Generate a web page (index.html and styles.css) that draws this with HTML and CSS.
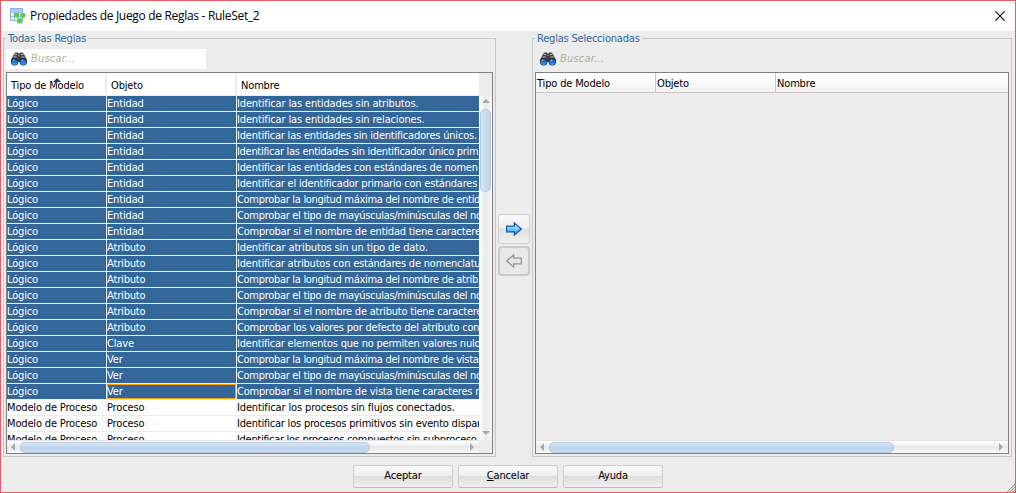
FILE: index.html
```html
<!DOCTYPE html>
<html lang="es">
<head>
<meta charset="utf-8">
<title>Propiedades de Juego de Reglas - RuleSet_2</title>
<link rel="stylesheet" href="styles.css">
</head>
<body>
<svg class="defs" width="0" height="0" aria-hidden="true">
  <defs>
    <linearGradient id="lens" x1="0" y1="0" x2="0" y2="1"><stop offset="0" stop-color="#0a55c4"/><stop offset="1" stop-color="#2da0ff"/></linearGradient>
    <linearGradient id="blue" x1="0" y1="0" x2="0" y2="1"><stop offset="0" stop-color="#e4f6ff"/><stop offset=".5" stop-color="#7cc8fa"/><stop offset="1" stop-color="#1a86e8"/></linearGradient>
    <symbol id="binoculars" viewBox="0 0 16 14">
      <path d="M3 2 4.500.5H7L8 2 9 .5h2.500L13 2l3 6v2H0V8z" fill="#444"/>
      <path d="M3.500 2.500h2.500M10 2.500h2.500M2.500 5h3M10.500 5h3M7.500 3.500h1" stroke="#bbb" stroke-width="1"/>
      <circle cx="3.700" cy="9.700" r="3.700" fill="#222"/><circle cx="12.300" cy="9.700" r="3.700" fill="#222"/>
      <circle cx="3.700" cy="10" r="3" fill="url(#lens)"/><circle cx="12.300" cy="10" r="3" fill="url(#lens)"/>
      <path d="M1.800 8.700 3.500 7.900M10.400 8.700l1.700-.8" stroke="#cfe6ff" stroke-width=".8"/>
    </symbol>
  </defs>
</svg>
<div class="dialog">
  <header class="titlebar">
    <svg class="app-icon" width="16" height="16" viewBox="0 0 16 16">
      <rect x=".5" y=".5" width="12" height="12" fill="#e4edfb" stroke="#8faadb"/>
      <rect x="1" y="1" width="11" height="3" fill="#b4caf0"/>
      <path d="M.5 4.500h12M.5 8.500h12M4.500.5v12M8.500.5v12" stroke="#a5bfe8" fill="none"/>
      <path d="M6 7h7l-3.500 6z" fill="none" stroke="#a5cf9a"/>
      <rect x="4" y="5" width="5" height="4.500" rx="1.500" fill="#55cf45"/>
      <rect x="10.500" y="5" width="5" height="4.500" rx="1.500" fill="#55cf45"/>
      <rect x="7" y="10.500" width="5.500" height="5" rx="1.500" fill="#55cf45"/>
    </svg>
    <h1>Propiedades de Juego de Reglas - RuleSet_2</h1>
    <svg class="close" width="10" height="10" viewBox="0 0 10 10"><path d="M.3.3l9.400 9.400M9.700.3.3 9.700" stroke="#111" stroke-width="1.200"/></svg>
  </header>
  <main class="panels">
    <section class="group group-left">
      <h2>Todas las Reglas</h2>
      <div class="search filled"><svg width="16" height="14"><use href="#binoculars"/></svg><span>Buscar...</span></div>
      <div class="table">
        <div class="head tall">
          <div class="c1">Tipo de Modelo<svg class="sort" width="8" height="4" viewBox="0 0 8 4"><path d="M0 4 4 0l4 4z" fill="#294157"/></svg></div><div class="c2">Objeto</div><div class="c3">Nombre</div>
        </div>
        <div class="middle">
          <div class="rows">
            <div class="row sel"><div>Lógico</div><div>Entidad</div><div class="wide">Identificar las entidades sin atributos.</div></div>
            <div class="row sel"><div>Lógico</div><div>Entidad</div><div class="wide">Identificar las entidades sin relaciones.</div></div>
            <div class="row sel"><div>Lógico</div><div>Entidad</div><div>Identificar las entidades sin identificadores únicos.</div></div>
            <div class="row sel"><div>Lógico</div><div>Entidad</div><div class="tight">Identificar las entidades sin identificador único prim</div></div>
            <div class="row sel"><div>Lógico</div><div>Entidad</div><div>Identificar las entidades con estándares de nomen</div></div>
            <div class="row sel"><div>Lógico</div><div>Entidad</div><div>Identificar el identificador primario con estándares</div></div>
            <div class="row sel"><div>Lógico</div><div>Entidad</div><div class="tight">Comprobar la longitud máxima del nombre de entid</div></div>
            <div class="row sel"><div>Lógico</div><div>Entidad</div><div class="tight">Comprobar el tipo de mayúsculas/minúsculas del no</div></div>
            <div class="row sel"><div>Lógico</div><div>Entidad</div><div>Comprobar si el nombre de entidad tiene caractere</div></div>
            <div class="row sel"><div>Lógico</div><div>Atributo</div><div class="wide">Identificar atributos sin un tipo de dato.</div></div>
            <div class="row sel"><div>Lógico</div><div>Atributo</div><div>Identificar atributos con estándares de nomenclatu</div></div>
            <div class="row sel"><div>Lógico</div><div>Atributo</div><div class="tight">Comprobar la longitud máxima del nombre de atrib</div></div>
            <div class="row sel"><div>Lógico</div><div>Atributo</div><div class="tight">Comprobar el tipo de mayúsculas/minúsculas del no</div></div>
            <div class="row sel"><div>Lógico</div><div>Atributo</div><div>Comprobar si el nombre de atributo tiene caractere</div></div>
            <div class="row sel"><div>Lógico</div><div>Atributo</div><div>Comprobar los valores por defecto del atributo con</div></div>
            <div class="row sel"><div>Lógico</div><div>Clave</div><div>Identificar elementos que no permiten valores nulo</div></div>
            <div class="row sel"><div>Lógico</div><div>Ver</div><div class="tight">Comprobar la longitud máxima del nombre de vista</div></div>
            <div class="row sel"><div>Lógico</div><div>Ver</div><div class="tight">Comprobar el tipo de mayúsculas/minúsculas del no</div></div>
            <div class="row sel"><div>Lógico</div><div class="focus">Ver</div><div>Comprobar si el nombre de vista tiene caracteres n</div></div>
            <div class="row"><div>Modelo de Proceso</div><div>Proceso</div><div class="wide">Identificar los procesos sin flujos conectados.</div></div>
            <div class="row"><div>Modelo de Proceso</div><div>Proceso</div><div>Identificar los procesos primitivos sin evento dispar</div></div>
            <div class="row"><div>Modelo de Proceso</div><div>Proceso</div><div class="tight">Identificar los procesos compuestos sin subproceso</div></div>
          </div>
          <div class="vbar">
            <svg width="8" height="4" viewBox="0 0 8 4"><path d="M0 4 4 0l4 4z" fill="#a9a9a9"/></svg>
            <div class="vthumb"></div>
            <svg width="8" height="4" viewBox="0 0 8 4"><path d="M0 0 4 4l4-4z" fill="#a9a9a9"/></svg>
          </div>
        </div>
        <div class="hbar with-corner">
          <svg width="4" height="8" viewBox="0 0 4 8"><path d="M4 0 0 4l4 4z" fill="#a9a9a9"/></svg>
          <div class="hthumb"></div>
          <svg width="4" height="8" viewBox="0 0 4 8"><path d="M0 0 4 4 0 8z" fill="#a9a9a9"/></svg>
        </div>
      </div>
    </section>
    <div class="transfer">
      <button class="move" aria-label="Añadir"><svg width="16" height="14" viewBox="0 0 16 14"><path d="M.7 4.200h7.600V.9L15.300 7l-7 6.100V9.800H.7z" fill="url(#blue)" stroke="#0b57b5" stroke-width="1.200"/></svg></button>
      <button class="move off" aria-label="Quitar"><svg width="16" height="14" viewBox="0 0 16 14"><path d="M15.300 4.200H7.700V.9L.7 7l7 6.100V9.800h7.600z" fill="#e6e6e6" stroke="#929292" stroke-width="1.200"/></svg></button>
    </div>
    <section class="group group-right">
      <h2>Reglas Seleccionadas</h2>
      <div class="search"><svg width="16" height="14"><use href="#binoculars"/></svg><span>Buscar...</span></div>
      <div class="table">
        <div class="head flat"><div>Tipo de Modelo</div><div>Objeto</div><div>Nombre</div></div>
        <div class="middle"></div>
        <div class="hbar">
          <svg width="4" height="8" viewBox="0 0 4 8"><path d="M4 0 0 4l4 4z" fill="#a9a9a9"/></svg>
          <div class="hthumb"></div>
          <svg width="4" height="8" viewBox="0 0 4 8"><path d="M0 0 4 4 0 8z" fill="#a9a9a9"/></svg>
        </div>
      </div>
    </section>
  </main>
  <footer class="actions">
    <button>Aceptar</button><button><u>C</u>ancelar</button><button>Ayuda</button>
  </footer>
  <svg class="grip" width="9" height="9" viewBox="0 0 9 9"><path d="M1 9 9 1M4 9l5-5M7 9l2-2" stroke="#999b8c" stroke-width="1.200"/><path d="M0 9 9 0M3 9l6-6M6 9l3-3" stroke="#fff" stroke-width=".6"/></svg>
</div>
</body>
</html>
```
FILE: styles.css
```css
* { box-sizing: border-box; }
body { margin: 0; }
.defs { position: absolute; }
.dialog {
  position: relative;
  width: 1016px;
  height: 493px;
  border: 1px solid #e85c69;
  background: #ececec;
  color: #000;
  font: 11px/15px "DejaVu Sans Condensed", "DejaVu Sans", sans-serif;
  font-stretch: condensed;
  letter-spacing: -0.16px;
  white-space: nowrap;
  overflow: hidden;
}
svg { display: block; flex: none; }

.titlebar { display: flex; align-items: center; height: 30px; padding: 0 10px 0 9px; background: #fff; }
.titlebar h1 { flex: 1; margin: 0 0 0 4px; font: 12px/16px "Open Sans", "Noto Sans", sans-serif; letter-spacing: -0.31px; }

.panels { display: flex; height: 426px; padding: 7px 3px 0 2px; }
.group { flex: none; height: 419px; border: 1px solid #c8c8c8; padding: 0 2px 2px; }
.group-left { width: 493px; }
.group-right { width: 480px; }
.group h2 { width: max-content; height: 15px; margin: -8px 0 0; padding: 0 2px; background: #ececec; color: #336699; font-size: 11px; line-height: 15px; font-weight: normal; }
.group-right h2 { letter-spacing: -0.2px; }
.search { display: flex; align-items: center; width: 200px; height: 20px; margin: 3px 0 3px; padding-left: 5px; gap: 4px; color: #b0b09c; font-style: italic; letter-spacing: 0.2px; line-height: 20px; }
.search span { height: 20px; }
.search.filled { background: #fff; }

.table { display: flex; flex-direction: column; height: 382px; border: 1px solid #808080; }
.head { display: flex; flex: none; }
.tall { height: 23px; padding-right: 13px; line-height: 25px; }
.tall div { position: relative; padding-left: 4px; background: #fff; border-right: 2px solid #ececec; border-bottom: 1px solid #ececec; }
.c1 { width: 100px; }
.c2 { width: 130px; }
.tall .c3 { flex: 1; border-right: 0; }
.sort { position: absolute; left: 46px; top: 5px; }
.flat { height: 20px; line-height: 21px; background: linear-gradient(#fff, #f2f2f2); border-bottom: 1px solid #c8c8c8; }
.flat div { width: 120px; padding-left: 1px; border-right: 1px solid #c8c8c8; }
.flat div:last-child { border: 0; }

.middle { display: flex; flex: 1; min-height: 0; overflow: hidden; }
.rows { width: 472px; overflow: hidden; background: #fff; }
.row { display: grid; grid-template-columns: 100px 130px 242px; height: 16px; }
.row div { height: 16px; overflow: hidden; border-right: 1px solid #ececec; border-bottom: 1px solid #ececec; }
.row div:last-child { border-right: 0; letter-spacing: -0.21px; }
.row div.wide:last-child { letter-spacing: -0.14px; }
.row div.tight:last-child { letter-spacing: -0.3px; }
.sel div { background: #336699; color: #fff; }
.row .focus { box-shadow: inset 0 0 0 1px #ffa000; }

.vbar { display: flex; flex-direction: column; align-items: center; width: 13px; padding: 3px 0; background: linear-gradient(90deg, #fff, #e9e9e9 50%, #f8f8f8); }
.vthumb { width: 11px; height: 83px; margin: 6px 0 auto; border-radius: 5px; border: 1px solid #b4cae2; background: linear-gradient(90deg, #d8e5f4, #bdd2ea); }
.vbar svg:last-child { margin-bottom: 2px; }
.hbar { display: flex; flex: none; align-items: center; height: 13px; padding: 0 5px 0 4px; border-top: 1px solid #e2e2e2; background: linear-gradient(#fff, #e9e9e9 50%, #f8f8f8); }
.with-corner { width: 472px; }
.hthumb { height: 11px; margin: 0 auto 0 5px; border: 1px solid #b4cae2; border-radius: 5px; background: linear-gradient(#d8e5f4, #bdd2ea 60%, #cbdcef); }
.group-left .hthumb { width: 350px; }
.group-right .hthumb { width: 345px; }

.transfer { width: 36px; padding: 176px 2px 0 2px; display: flex; flex-direction: column; align-items: center; gap: 2px; }
button { margin: 0; padding: 0; border: 1px solid #d0d0d0; border-radius: 3px; background: linear-gradient(#fafafa, #efefef 45%, #dedede 50%, #f1f1f1); font: inherit; letter-spacing: inherit; color: #000; }
.move { display: flex; align-items: center; justify-content: center; width: 32px; height: 30px; }
.off { border: 2px solid #cacaca; border-radius: 4px; background: #e8e8e8; }

.actions { display: flex; gap: 5px; padding: 8px 0 0 352px; }
.actions button { width: 100px; height: 23px; padding: 0 0 2px; border-bottom-color: #bbb; }
.grip { position: absolute; right: 0; bottom: 0; }
```
